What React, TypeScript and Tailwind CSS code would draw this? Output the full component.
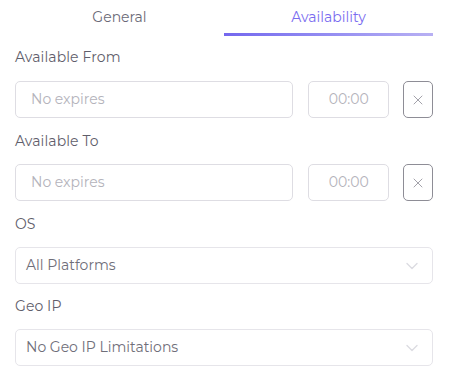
import React from "react";

const font = { fontFamily: "Montserrat, Inter, 'Noto Sans', sans-serif" };

function XIcon() {
  return (
    <svg width="10" height="10" viewBox="0 0 10 10" fill="none">
      <path d="M1 1L9 9M9 1L1 9" stroke="#a3a2aa" strokeWidth="1" strokeLinecap="round" />
    </svg>
  );
}

function Chevron() {
  return (
    <svg width="12" height="8" viewBox="0 0 12 8" fill="none">
      <path d="M1 1.5L6 6.5L11 1.5" stroke="#dcdce2" strokeWidth="1.4" strokeLinecap="round" strokeLinejoin="round" />
    </svg>
  );
}

function Label({ children }: { children: React.ReactNode }) {
  return <div className="text-[14px] leading-[20px] text-[#5f5e6b] h-[20px] tracking-[0.1px]">{children}</div>;
}

function DateRow() {
  return (
    <div className="flex items-center h-[37px]">
      <div className="w-[279px] h-[37px] border border-[#dedde3] rounded-[5px] flex items-center pl-[15px] text-[14px] text-[#b4b3bb]">
        No expires
      </div>
      <div className="ml-[15px] w-[81px] h-[37px] border border-[#dedde3] rounded-[5px] flex items-center justify-center text-[14px] text-[#b4b3bb]">
        00:00
      </div>
      <div className="ml-[14px] w-[30px] h-[37px] border border-[#8e8d96] rounded-[5px] flex items-center justify-center">
        <XIcon />
      </div>
    </div>
  );
}

function Select({ text }: { text: string }) {
  return (
    <div className="h-[37px] border border-[#e6e5ea] rounded-[5px] flex items-center justify-between pl-[10px] pr-[14px] text-[14px] text-[#6f6e79]">
      <span>{text}</span>
      <Chevron />
    </div>
  );
}

export default function App() {
  return (
    <div className="w-[454px] h-[377px] bg-white overflow-hidden" style={font}>
      <div className="ml-[15px] w-[418px]">
        <div className="flex h-[36px]">
          <div className="flex-1 flex items-start justify-center pt-[7px] text-[14px] text-[#6a6976]">General</div>
          <div className="flex-1 flex flex-col items-center">
            <div className="pt-[7px] text-[14px] text-[#7a6cf0] h-[33px]">Availability</div>
            <div className="w-full h-[3px] bg-gradient-to-r from-[#7467ee] to-[#b8b0f3]" />
          </div>
        </div>
        <div className="mt-[11px]">
          <Label>Available From</Label>
        </div>
        <div className="mt-[14px]">
          <DateRow />
        </div>
        <div className="mt-[13px]">
          <Label>Available To</Label>
        </div>
        <div className="mt-[13px]">
          <DateRow />
        </div>
        <div className="mt-[13px]">
          <Label>OS</Label>
        </div>
        <div className="mt-[13px]">
          <Select text="All Platforms" />
        </div>
        <div className="mt-[12px]">
          <Label>Geo IP</Label>
        </div>
        <div className="mt-[13px]">
          <Select text="No Geo IP Limitations" />
        </div>
      </div>
    </div>
  );
}
